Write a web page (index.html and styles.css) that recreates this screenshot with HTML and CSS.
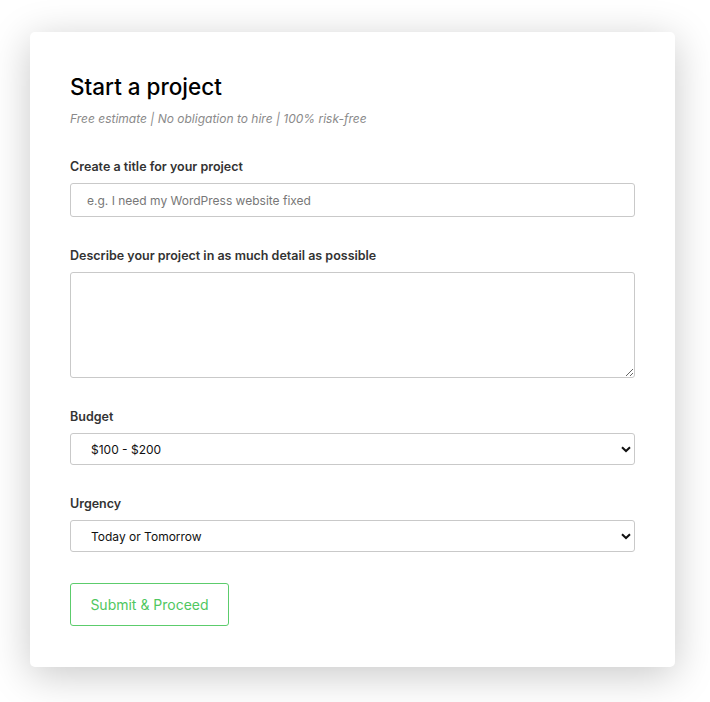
FILE: index.html
```html
<!DOCTYPE html>
<html>
<head>
<meta charset="utf-8">
<link rel="stylesheet" href="styles.css">
</head>
<body>
<div class="card">
  <h1 class="title">Start a project</h1>
  <p class="subtitle">Free estimate | No obligation to hire | 100% risk-free</p>
  <div class="field">
    <label class="label">Create a title for your project</label>
    <input class="input" type="text" placeholder="e.g. I need my WordPress website fixed">
  </div>
  <div class="field">
    <label class="label">Describe your project in as much detail as possible</label>
    <textarea class="textarea"></textarea>
  </div>
  <div class="field">
    <label class="label">Budget</label>
    <div class="select-wrap">
      <select class="select"><option>$100 - $200</option></select>
      <svg class="chev" width="10" height="7" viewBox="0 0 10 7"><path d="M1 1.2 L5 5 L9 1.2" fill="none" stroke="#111" stroke-width="2"/></svg>
    </div>
  </div>
  <div class="field">
    <label class="label">Urgency</label>
    <div class="select-wrap">
      <select class="select"><option>Today or Tomorrow</option></select>
      <svg class="chev" width="10" height="7" viewBox="0 0 10 7"><path d="M1 1.2 L5 5 L9 1.2" fill="none" stroke="#111" stroke-width="2"/></svg>
    </div>
  </div>
  <button class="btn">Submit &amp; Proceed</button>
</div>
</body>
</html>
```
FILE: styles.css
```css
html, body { margin: 0; background: #fff; }
body {
  padding: 32px 35px 36px 30px;
  font-family: Inter, "Noto Sans", sans-serif;
}
.card {
  width: 645px;
  box-sizing: border-box;
  background: #fff;
  border-radius: 5px;
  box-shadow: 0 8px 40px rgba(0,0,0,0.22);
  padding: 40px 40px 41px 40px;
  display: flex;
  flex-direction: column;
}
.title {
  margin: 0;
  font-size: 22.5px;
  line-height: 30px;
  font-weight: 500;
  color: #000;
}
.subtitle {
  margin: 9px 0 0;
  font-size: 12px;
  line-height: 16px;
  font-style: italic;
  color: #8a8a8a;
}
.field {
  display: flex;
  flex-direction: column;
  margin-top: 32px;
}
.field + .field { margin-top: 31px; }
.label {
  font-size: 12.5px;
  line-height: 16px;
  font-weight: 600;
  color: #333;
  margin-bottom: 8px;
}
.input {
  box-sizing: border-box;
  height: 34px;
  border: 1px solid #c9c9c9;
  border-radius: 3px;
  padding: 0 16px;
  font-family: inherit;
  font-size: 12px;
  color: #333;
  outline: none;
}
.input::placeholder { color: #777; }
.textarea {
  box-sizing: border-box;
  height: 106px;
  border: 1px solid #c9c9c9;
  border-radius: 3px;
  padding: 8px 16px;
  font-family: inherit;
  font-size: 12px;
  outline: none;
}
.select-wrap { position: relative; }
.select {
  appearance: none;
  -webkit-appearance: none;
  box-sizing: border-box;
  width: 100%;
  height: 32px;
  border: 1px solid #c9c9c9;
  border-radius: 3px;
  background: #fff;
  padding: 0 20px;
  font-family: inherit;
  font-size: 12px;
  color: #111;
  outline: none;
}
.chev {
  position: absolute;
  right: 4px;
  top: 13px;
  pointer-events: none;
}
.btn {
  align-self: flex-start;
  margin-top: 31px;
  width: 159px;
  height: 43px;
  background: #fff;
  border: 1px solid #5ccc6c;
  border-radius: 3px;
  color: #4fc760;
  font-family: inherit;
  font-size: 14px;
  cursor: pointer;
}
```
